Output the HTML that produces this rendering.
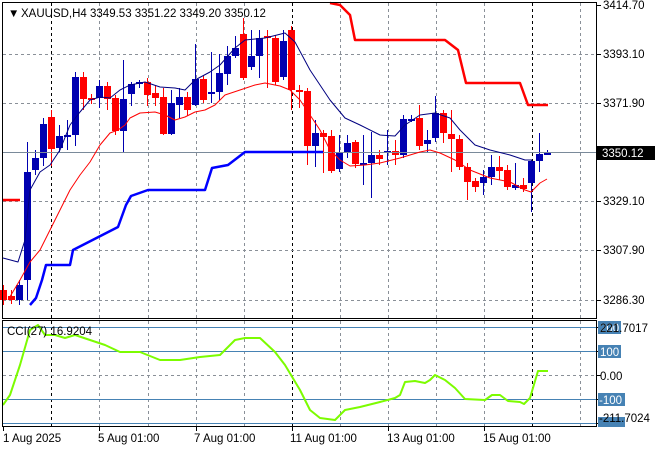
<!DOCTYPE html>
<html><head><meta charset="utf-8"><style>
body{margin:0;background:#fff;width:660px;height:450px;overflow:hidden;font-family:"Liberation Sans",sans-serif;}
svg{position:absolute;left:0;top:0}
text{font-family:"Liberation Sans",sans-serif;font-size:11.5px;fill:#000}
</style></head><body>
<svg id="s" width="660" height="450" xmlns="http://www.w3.org/2000/svg">
<g id="grid" stroke="#8a9098" stroke-width="1" stroke-dasharray="3,3" fill="none"></g>
<g id="cand"></g>
<g id="lines" fill="none"></g>
<rect x="2.5" y="2.5" width="594" height="316" fill="none" stroke="#000"/>
<rect x="2.5" y="320.5" width="594" height="106" fill="none" stroke="#000"/>
<g id="ticks" stroke="#000"></g>
<text x="8" y="17" font-size="10">▼</text>
<text x="21" y="17">XAUUSD,H4  3349.53 3351.22 3349.20 3350.12</text>
<text x="7" y="335">CCI(27) 16.9204</text>
<text x="603" y="9">3414.70</text>
<text x="603" y="58">3393.10</text>
<text x="603" y="107">3371.90</text>
<rect x="597" y="146" width="58" height="14" fill="#000"/>
<text x="602" y="157" style="fill:#fff">3350.12</text>
<text x="603" y="205">3329.10</text>
<text x="603" y="254">3307.90</text>
<text x="603" y="304">3286.30</text>
<rect x="598" y="321" width="23" height="13" fill="#4682b4"/>
<text x="600" y="332" style="fill:#fff">200</text>
<text x="600" y="332">221.7017</text>
<rect x="598" y="345" width="23" height="13" fill="#4682b4"/>
<text x="600" y="356" style="fill:#fff">100</text>
<text x="600" y="380">0.00</text>
<rect x="598" y="393" width="27" height="13" fill="#4682b4"/>
<text x="599" y="404" style="fill:#fff">-100</text>
<rect x="598" y="417" width="27" height="10" fill="#4682b4"/>
<text x="599" y="422">-211.7024</text>
<text x="3" y="442">1 Aug 2025</text>
<text x="98" y="442">5 Aug 01:00</text>
<text x="194" y="442">7 Aug 01:00</text>
<text x="290" y="442">11 Aug 01:00</text>
<text x="387" y="442">13 Aug 01:00</text>
<text x="483" y="442">15 Aug 01:00</text>
</svg>
<script>
var NS="http://www.w3.org/2000/svg";
function el(p,t,a){var e=document.createElementNS(NS,t);for(var k in a)e.setAttribute(k,a[k]);document.getElementById(p).appendChild(e);return e;}
var vx=[51,99,148,196,244,292,340,388,436,484,532,580];
vx.forEach(function(x){var c=(x==51||x==292||x==532)?"#000":"#8a9098";
el("grid","line",{x1:x+.5,y1:3,x2:x+.5,y2:318,stroke:c});el("grid","line",{x1:x+.5,y1:321,x2:x+.5,y2:426,stroke:c});});
[54,103,201,250,300].forEach(function(y){el("grid","line",{x1:3,y1:y+.5,x2:596,y2:y+.5});});
el("grid","line",{x1:3,y1:375.5,x2:596,y2:375.5});
[327,351,399,423].forEach(function(y){el("lines","line",{x1:3,y1:y+.5,x2:596,y2:y+.5,stroke:"#4682b4"});});
el("lines","line",{x1:3,y1:152.5,x2:596,y2:152.5,stroke:"#7a8a9a"});
[5,54,103,152,201,250,300].forEach(function(y){el("ticks","line",{x1:597,y1:y+.5,x2:601,y2:y+.5});});
[327,351,375,399,423].forEach(function(y){el("ticks","line",{x1:597,y1:y+.5,x2:601,y2:y+.5});});
[3,99,196,292,388,484].forEach(function(x){el("ticks","line",{x1:x+.5,y1:427,x2:x+.5,y2:431});});
var C=[[290,300,285,305],[296,300,290,304],[300,285,280,305],[280,172,142,300],[170,158,150,175],[158,124,118,166],[117,149,110,166],[148,136,125,152],[136,135,120,150],[135,77,72,146],[77,99,72,110],[98,100,94,104],[98,86,80,108],[86,99,82,110],[98,131,95,135],[131,99,60,153],[94,84,82,106],[84,82,80,88],[82,95,78,106],[93,98,86,106],[97,134,88,135],[134,103,90,135],[105,97,88,118],[97,110,92,116],[105,79,44,106],[79,100,76,103],[94,92,52,103],[92,73,54,100],[74,56,46,85],[56,48,36,58],[34,78,18,80],[67,56,30,70],[56,38,30,78],[36,38,30,88],[38,82,35,85],[77,41,30,80],[30,90,26,110],[90,92,85,108],[91,146,88,165],[146,133,120,167],[133,137,130,173],[136,171,130,173],[169,153,135,172],[153,143,135,158],[142,164,140,168],[165,163,135,185],[163,155,132,198],[155,159,150,165],[153,151,130,165],[151,155,140,165],[155,119,115,158],[120,119,115,122],[118,146,105,150],[144,140,130,152],[138,113,96,142],[113,133,110,143],[134,139,110,172],[139,167,135,170],[167,182,163,200],[181,187,178,192],[183,177,170,195],[177,167,155,185],[167,171,156,180],[170,187,165,190],[188,185,163,190],[185,189,178,192],[183,161,160,212],[161,154,133,172],[154,153,150,155]];
C.forEach(function(c,i){var x=3+8*i;var up=c[1]<c[0];var col=up?"#0000b0":"#ff0000";
el("cand","line",{x1:x+.5,y1:c[2],x2:x+.5,y2:c[3],stroke:col});
var t=Math.min(c[0],c[1]),h=Math.max(2,Math.abs(c[0]-c[1]));
el("cand","rect",{x:x-3,y:t,width:7,height:h,fill:col});});
function pl(pts,col,w){el("lines","polyline",{points:pts.map(function(p){return p.join(",")}).join(" "),stroke:col,"stroke-width":w,"stroke-linejoin":"round"});}
pl([[3,258],[18,262],[25,240],[30,190],[40,172],[50,165],[60,150],[70,125],[80,112],[90,100],[100,97],[110,98],[120,90],[130,85],[145,82],[160,87],[175,88],[185,90],[195,80],[210,72],[220,65],[235,48],[245,40],[265,38],[285,33],[295,42],[310,70],[330,100],[345,118],[360,125],[380,135],[395,136],[405,125],[420,115],[435,113],[450,118],[460,130],[475,145],[490,150],[510,155],[525,160],[532,160]],"#000080",1);
pl([[8,300],[20,280],[30,262],[40,250],[50,230],[60,210],[70,190],[80,175],[90,162],[100,145],[110,133],[118,130],[125,125],[130,118],[140,113],[155,112],[165,115],[175,120],[185,117],[195,112],[205,110],[215,105],[225,95],[240,90],[255,85],[265,83],[280,86],[290,90],[300,100],[310,115],[320,130],[330,150],[340,160],[350,166],[365,165],[380,163],[400,158],[420,152],[430,150],[440,153],[455,160],[470,170],[490,178],[510,182],[525,190],[531,192],[540,183],[547,179]],"#ff0000",1);
pl([[30,305],[36,298],[42,280],[46,265],[70,265],[73,250],[118,227],[126,205],[131,196],[148,190],[205,190],[212,168],[228,165],[245,152],[323,152]],"#0000ff",2.5);
pl([[3,200],[20,200]],"#ff0000",2.5);
pl([[330,3],[340,5],[350,15],[355,40],[445,40],[458,50],[466,83],[520,83],[528,105],[548,105]],"#ff0000",2.5);
pl([[3,405],[10,395],[20,365],[30,330],[38,325],[45,335],[55,335],[65,338],[75,335],[90,340],[105,345],[120,352],[140,352],[160,360],[180,360],[200,357],[220,355],[235,340],[245,338],[260,338],[275,352],[285,365],[300,390],[310,410],[320,418],[335,420],[345,410],[360,407],[380,402],[395,398],[400,395],[405,382],[415,381],[425,383],[430,380],[435,375],[445,380],[455,388],[465,399],[485,400],[492,395],[500,395],[508,401],[520,402],[524,404],[530,398],[538,371],[548,371]],"#7cfc00",2);
</script>
</body></html>
